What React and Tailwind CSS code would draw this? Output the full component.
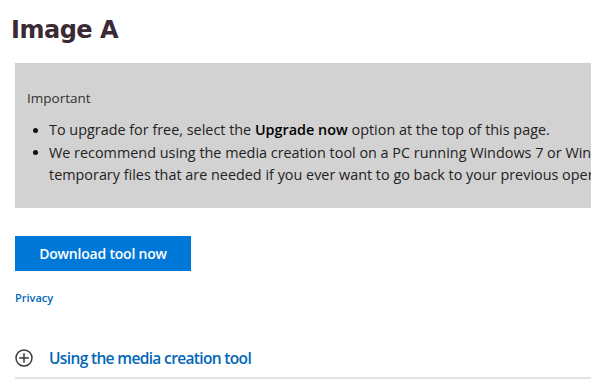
import React from "react";

function Dot() {
  return (
    <span className="w-[22px] shrink-0 flex items-center pl-[6px]">
      <span className="w-[5px] h-[5px] rounded-full bg-[#111]" />
    </span>
  );
}

export default function App() {
  const font = { fontFamily: '"Open Sans", "Noto Sans", sans-serif' };
  return (
    <div className="w-[600px] h-[386px] bg-white overflow-hidden relative" style={font}>
      <h1
        className="ml-[11px] pt-[15px] text-[24px] leading-[30px] font-bold tracking-[-0.5px] text-[#3a2a33]"
        style={{ fontFamily: '"DejaVu Sans", Verdana, sans-serif' }}
      >
        Image A
      </h1>
      <div className="ml-[15px] mt-[18px] w-[576px] h-[145px] bg-[#d2d2d2] overflow-hidden pl-[12px] pt-[24px] text-[#222] text-[14.4px]">
        <div className="leading-[22px] text-[13.5px] text-[#333]">Important</div>
        <ul className="mt-[10px] leading-[22.5px] whitespace-nowrap">
          <li className="flex">
            <Dot />
            <span>
              To upgrade for free, select the <b className="font-semibold text-black">Upgrade now</b> option at the top of this page.
            </span>
          </li>
          <li className="flex">
            <Dot />
            <span>
              We recommend using the media creation tool on a PC running Windows 7 or Windows 8.1 for the best download experience.
            </span>
          </li>
          <li className="flex">
            <span className="w-[22px] shrink-0" />
            <span>
              temporary files that are needed if you ever want to go back to your previous operating system.
            </span>
          </li>
        </ul>
      </div>
      <div className="ml-[15px] mt-[28px] w-[176px] h-[35px] bg-[#0078d7] flex items-center justify-center text-white text-[14px] font-semibold tracking-[-0.2px]">
        Download tool now
      </div>
      <div className="ml-[15px] mt-[19px] text-[11px] leading-[16px] font-semibold text-[#0067b8]">Privacy</div>
      <div className="ml-[15px] mt-[41px] flex items-center gap-[16px]">
        <svg width="18" height="18" viewBox="0 0 18 18" className="shrink-0">
          <circle cx="9" cy="9" r="8" fill="none" stroke="#333" strokeWidth="1.4" />
          <path d="M9 4.2v9.6M4.2 9h9.6" stroke="#333" strokeWidth="1.4" />
        </svg>
        <span className="text-[15.5px] leading-[22px] font-semibold tracking-[-0.65px] text-[#0067b8]">Using the media creation tool</span>
      </div>
      <div className="ml-[15px] mt-[8px] w-[576px] h-[2px] bg-[#e3e3e3]" />
    </div>
  );
}
